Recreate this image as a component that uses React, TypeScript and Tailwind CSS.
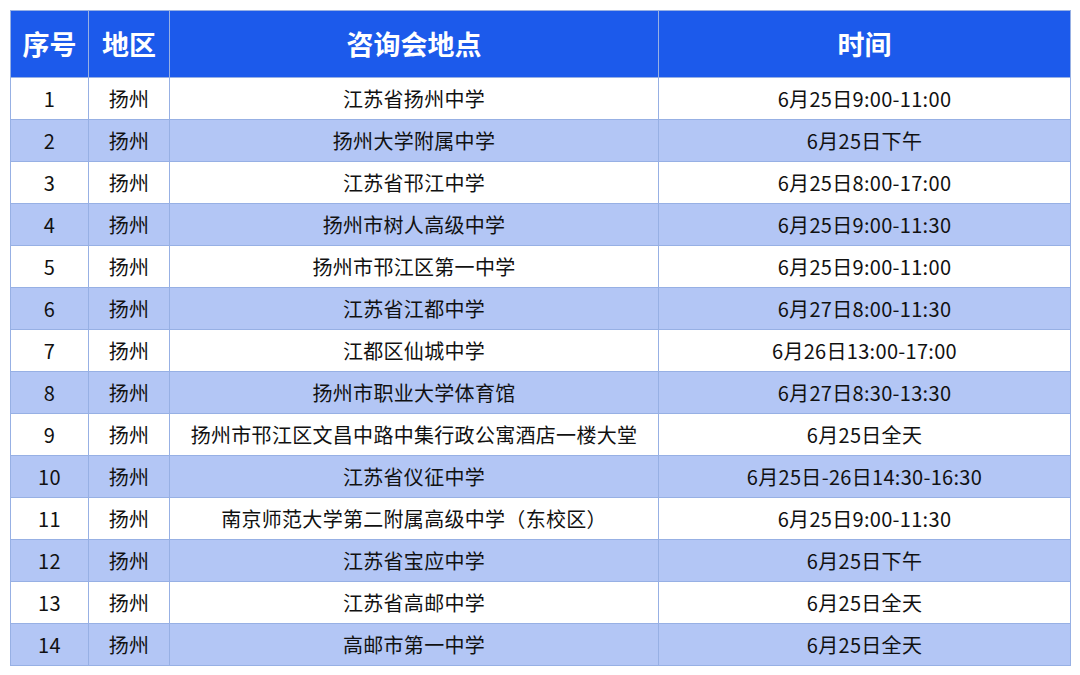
const rows: [string, string, string, string][] = [
  ["1", "扬州", "江苏省扬州中学", "6月25日9:00-11:00"],
  ["2", "扬州", "扬州大学附属中学", "6月25日下午"],
  ["3", "扬州", "江苏省邗江中学", "6月25日8:00-17:00"],
  ["4", "扬州", "扬州市树人高级中学", "6月25日9:00-11:30"],
  ["5", "扬州", "扬州市邗江区第一中学", "6月25日9:00-11:00"],
  ["6", "扬州", "江苏省江都中学", "6月27日8:00-11:30"],
  ["7", "扬州", "江都区仙城中学", "6月26日13:00-17:00"],
  ["8", "扬州", "扬州市职业大学体育馆", "6月27日8:30-13:30"],
  ["9", "扬州", "扬州市邗江区文昌中路中集行政公寓酒店一楼大堂", "6月25日全天"],
  ["10", "扬州", "江苏省仪征中学", "6月25日-26日14:30-16:30"],
  ["11", "扬州", "南京师范大学第二附属高级中学（东校区）", "6月25日9:00-11:30"],
  ["12", "扬州", "江苏省宝应中学", "6月25日下午"],
  ["13", "扬州", "江苏省高邮中学", "6月25日全天"],
  ["14", "扬州", "高邮市第一中学", "6月25日全天"],
]

export default function App() {
  return (
    <div
      className="w-[1080px] h-[675px] bg-white pt-[10px] pl-[10px]"
      style={{ fontFamily: '"Noto Sans CJK SC", "Noto Sans", sans-serif' }}
    >
      <table className="border-collapse w-[1060px] table-fixed text-[#111] text-[20px] tracking-[0.3px]">
        <colgroup>
          <col className="w-[78px]" />
          <col className="w-[81px]" />
          <col className="w-[489px]" />
          <col className="w-[412px]" />
        </colgroup>
        <thead>
          <tr className="h-[67px] bg-[#1c5aeb] text-white text-[27px] font-bold tracking-normal">
            <th className="border border-[#97b0e4] p-0">序号</th>
            <th className="border border-[#97b0e4] p-0">地区</th>
            <th className="border border-[#97b0e4] p-0">咨询会地点</th>
            <th className="border border-[#97b0e4] p-0">时间</th>
          </tr>
        </thead>
        <tbody>
          {rows.map((r, i) => (
            <tr key={r[0]} className={i % 2 === 1 ? "h-[42px] bg-[#b3c6f5]" : "h-[42px] bg-white"}>
              {r.map((c, j) => (
                <td key={j} className="border border-[#97b0e4] p-0 text-center whitespace-nowrap">
                  {c}
                </td>
              ))}
            </tr>
          ))}
        </tbody>
      </table>
    </div>
  )
}
